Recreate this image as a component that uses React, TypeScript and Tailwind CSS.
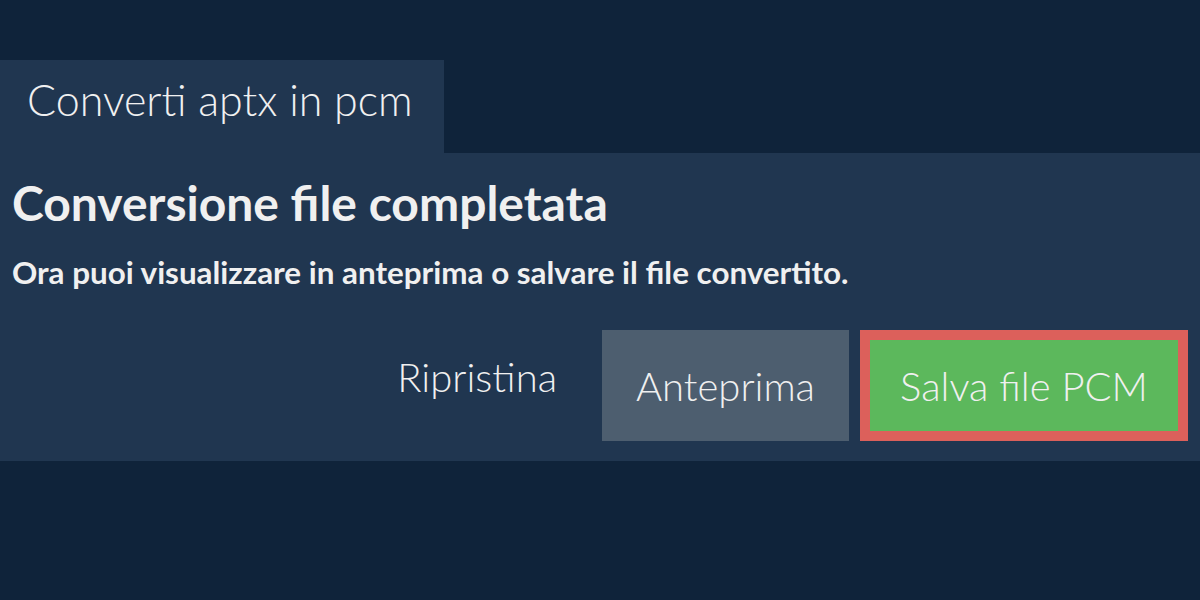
export default function App() {
  return (
    <div className="h-[600px] w-[1200px] bg-[#0f233a] pt-[60px] font-['Lato',sans-serif] text-[#f0f0f0]">
      {/* Tab */}
      <div className="inline-block h-[93px] w-[444px] bg-[#203650] pl-[27px] pt-[18px]">
        <span className="block text-[43px] font-light leading-none">Converti aptx in pcm</span>
      </div>

      {/* Panel */}
      <div className="bg-[#203650] px-[12px] pt-[26px] pb-[20px]">
        <h1 className="text-[48px] font-bold leading-none">Conversione file completata</h1>
        <p className="mt-[30px] text-[31.4px] font-bold leading-none">
          Ora puoi visualizzare in anteprima o salvare il file convertito.
        </p>

        <div className="mt-[42px] flex items-start justify-end gap-[11px]">
          <button className="flex h-[111px] items-start px-[34px] pt-[27px] text-[40px] font-light leading-none">
            Ripristina
          </button>
          <button className="flex h-[111px] w-[247px] items-center justify-center bg-[#4d5e6f] text-[40px] font-light leading-none">
            Anteprima
          </button>
          <button className="flex h-[111px] w-[328px] items-center justify-center border-[10px] border-[#dc605b] bg-[#5cb85c] text-[40px] font-light leading-none">
            Salva file PCM
          </button>
        </div>
      </div>
    </div>
  );
}
